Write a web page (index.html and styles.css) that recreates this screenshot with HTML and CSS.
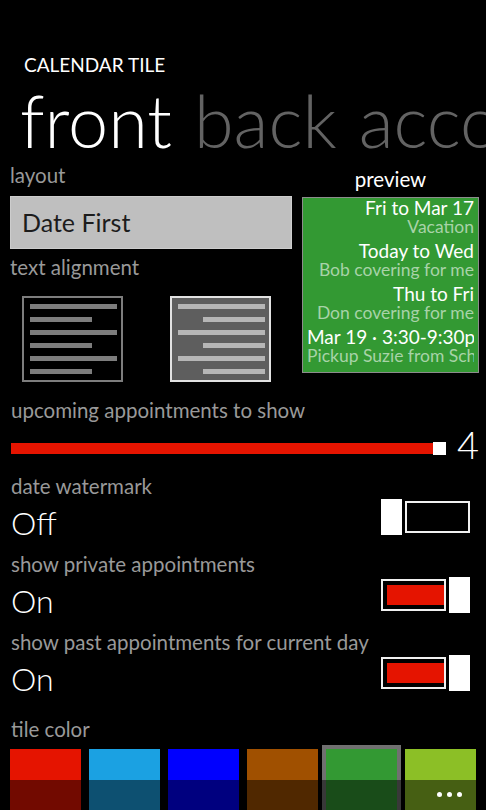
FILE: index.html
```html
<!DOCTYPE html>
<html lang="en">
<head>
    <meta charset="UTF-8">
    <meta name="viewport" content="width=device-width, initial-scale=1.0">
    <title>Calendar Tile</title>
    <link rel="stylesheet" href="styles.css">
</head>
<body>

    <div class="pagina">
        <div class="titulo-app">CALENDAR TILE</div>

        <div class="pivot">
            <span class="activo">front</span>
            <span>back</span>
            <span>accounts</span>
        </div>

        <div class="arriba">
            <div class="col-izq">
                <div class="etiqueta">layout</div>
                <div class="selector">Date First</div>

                <div class="etiqueta espacio">text alignment</div>
                <div class="alineaciones">
                    <!-- izquierda -->
                    <div class="caja-alin">
                        <div class="barra"></div>
                        <div class="barra corta"></div>
                        <div class="barra"></div>
                        <div class="barra corta"></div>
                        <div class="barra"></div>
                        <div class="barra corta"></div>
                    </div>
                    <!-- derecha (seleccionada) -->
                    <div class="caja-alin elegida">
                        <div class="barra"></div>
                        <div class="barra corta"></div>
                        <div class="barra"></div>
                        <div class="barra corta"></div>
                        <div class="barra"></div>
                        <div class="barra corta"></div>
                    </div>
                </div>
            </div>

            <div class="col-der">
                <div class="etiqueta-preview">preview</div>
                <div class="tile">
                    <div class="evento">
                        <div class="cuando">Fri to Mar 17</div>
                        <div class="que">Vacation</div>
                    </div>
                    <div class="evento">
                        <div class="cuando">Today to Wed</div>
                        <div class="que">Bob covering for me</div>
                    </div>
                    <div class="evento">
                        <div class="cuando">Thu to Fri</div>
                        <div class="que">Don covering for me</div>
                    </div>
                    <div class="evento">
                        <div class="cuando">Mar 19 · 3:30-9:30p</div>
                        <div class="que">Pickup Suzie from School</div>
                    </div>
                </div>
            </div>
        </div>

        <div class="ajuste slider-ajuste">
            <div class="etiqueta">upcoming appointments to show</div>
            <div class="fila-slider">
                <div class="pista-slider">
                    <div class="pulgar-slider"></div>
                </div>
                <div class="valor-slider">4</div>
            </div>
        </div>

        <div class="ajuste primero">
            <div class="etiqueta">date watermark</div>
            <div class="fila-toggle">
                <div class="valor">Off</div>
                <div class="toggle">
                    <div class="pulgar"></div>
                    <div class="pista"></div>
                </div>
            </div>
        </div>

        <div class="ajuste">
            <div class="etiqueta">show private appointments</div>
            <div class="fila-toggle">
                <div class="valor">On</div>
                <div class="toggle">
                    <div class="pista"><div class="relleno"></div></div>
                    <div class="pulgar"></div>
                </div>
            </div>
        </div>

        <div class="ajuste">
            <div class="etiqueta">show past appointments for current day</div>
            <div class="fila-toggle">
                <div class="valor">On</div>
                <div class="toggle">
                    <div class="pista"><div class="relleno"></div></div>
                    <div class="pulgar"></div>
                </div>
            </div>
        </div>

        <div class="ajuste colores-ajuste">
            <div class="etiqueta">tile color</div>
            <div class="colores">
                <div class="color" style="background-color: #e51400;"></div>
                <div class="color" style="background-color: #1ba1e2;"></div>
                <div class="color" style="background-color: #0000ff;"></div>
                <div class="color" style="background-color: #a05000;"></div>
                <div class="color elegido" style="background-color: #339933;"></div>
                <div class="color" style="background-color: #8cbf26;"></div>
            </div>
        </div>

        <!-- Barra de aplicación minimizada -->
        <div class="app-bar">
            <span class="punto"></span>
            <span class="punto"></span>
            <span class="punto"></span>
        </div>
    </div>

</body>
</html>
```

FILE: styles.css
```css
/* Tema oscuro estilo teléfono */
body {
    margin: 0;
    padding: 0;
    background-color: #000;
    color: #fff;
    font-family: Lato, "Liberation Sans", sans-serif;
}
.pagina {
    width: 486px;
    height: 810px;
    overflow: hidden;
    position: relative;
    padding-top: 53px;
    box-sizing: border-box;
}
.titulo-app {
    margin-left: 24px;
    font-size: 19px;
    line-height: 24px;
}
/* Cabecera del pivot */
.pivot {
    display: flex;
    margin-top: 3px;
    margin-left: 20px;
    font-size: 72px;
    line-height: 80px;
    font-weight: 300;
    color: #636363;
    white-space: nowrap;
}
.pivot span {
    flex: none;
    margin-right: 22px;
}
.pivot .activo {
    color: #fff;
}
.etiqueta {
    font-size: 20.5px;
    line-height: 24px;
    color: #999;
    white-space: nowrap;
}
/* Parte de arriba: layout + preview */
.arriba {
    display: flex;
    margin-top: 3px;
}
.col-izq {
    width: 282px;
    margin-left: 10px;
}
.selector {
    margin-top: 9px;
    height: 53px;
    box-sizing: border-box;
    background-color: #bfbfbf;
    border: 1px solid #cdcdcd;
    padding-left: 11px;
    font-size: 25px;
    line-height: 51px;
    color: #1c1c1c;
}
.etiqueta.espacio {
    margin-top: 6px;
}
.alineaciones {
    display: flex;
    gap: 47px;
    margin-top: 17px;
    margin-left: 12px;
}
.caja-alin {
    width: 101px;
    height: 86px;
    box-sizing: border-box;
    border: 2px solid #7d7d7d;
    padding: 6px 4px 6px 6px;
    display: flex;
    flex-direction: column;
    gap: 8px;
}
.caja-alin .barra {
    height: 5px;
    width: 100%;
    background-color: #7d7d7d;
}
.caja-alin .barra.corta {
    width: 62px;
}
.caja-alin.elegida {
    background-color: #5e5e5e;
    border-color: #e2e2e2;
    align-items: flex-end;
}
.caja-alin.elegida .barra {
    background-color: #b6b6b6;
}
.col-der {
    width: 177px;
    margin-left: 10px;
}
.etiqueta-preview {
    margin-top: 4px;
    text-align: center;
    font-size: 20.5px;
    line-height: 24px;
}
/* Vista previa del tile */
.tile {
    margin-top: 6px;
    width: 177px;
    height: 176px;
    box-sizing: border-box;
    border: 1px solid #8c8c8c;
    background-color: #339933;
    padding: 0 4px;
    overflow: hidden;
    text-align: right;
}
.evento + .evento {
    margin-top: 5px;
}
.cuando {
    font-size: 19px;
    line-height: 20px;
    white-space: nowrap;
    overflow: hidden;
}
.que {
    font-size: 17.5px;
    line-height: 18px;
    color: #a8d3a8;
    white-space: nowrap;
    overflow: hidden;
}
/* Ajustes */
.ajuste {
    margin-top: 4px;
    padding-left: 11px;
}
.slider-ajuste {
    margin-top: 16px;
}
.fila-slider {
    display: flex;
    align-items: flex-start;
    height: 40px;
    margin-top: 2px;
}
.pista-slider {
    flex: 1;
    position: relative;
    height: 11px;
    margin-top: 19px;
    background-color: #e51400;
}
.pulgar-slider {
    position: absolute;
    right: 0;
    top: -1px;
    width: 13px;
    height: 13px;
    background-color: #fff;
}
.valor-slider {
    width: 29px;
    margin-left: 11px;
    font-size: 38px;
    line-height: 40px;
    font-weight: 300;
}
.ajuste.primero {
    margin-top: 10px;
}
.fila-toggle {
    display: flex;
    justify-content: space-between;
    align-items: flex-start;
    height: 50px;
}
.valor {
    font-size: 32px;
    line-height: 50px;
    font-weight: 300;
}
.toggle {
    display: flex;
    align-items: center;
    gap: 3px;
    margin-top: 1px;
    margin-right: 16px;
}
.pulgar {
    width: 21px;
    height: 36px;
    background-color: #fff;
}
.pista {
    width: 65px;
    height: 32px;
    box-sizing: border-box;
    border: 2px solid #f0f0f0;
    padding: 4px 0 4px 4px;
}
.relleno {
    height: 100%;
    background-color: #e51400;
}
.colores-ajuste {
    margin-top: 13px;
}
.colores {
    display: flex;
    gap: 8px;
    margin-top: 8px;
    margin-left: -1px;
}
.color {
    flex: none;
    width: 71px;
    height: 71px;
}
.color.elegido {
    outline: 4px solid #707070;
}
/* Barra de aplicación (encima del contenido) */
.app-bar {
    position: absolute;
    left: 0;
    right: 0;
    bottom: 0;
    height: 30px;
    background-color: rgba(0, 0, 0, 0.5);
    display: flex;
    justify-content: flex-end;
    gap: 5px;
    padding: 12px 24px 0 0;
    box-sizing: border-box;
}
.punto {
    width: 5px;
    height: 5px;
    border-radius: 50%;
    background-color: #fff;
}
```
